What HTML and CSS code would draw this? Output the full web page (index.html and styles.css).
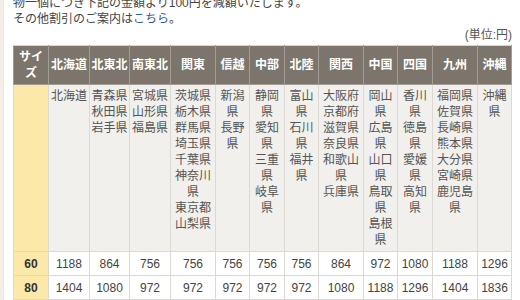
FILE: index.html
```html
<!DOCTYPE html>
<html lang="ja">
<head>
<meta charset="utf-8">
<link rel="stylesheet" href="styles.css">
</head>
<body>
<div class="page">
  <div class="side"></div>
  <main class="main">
    <p class="intro">物一個につき下記の金額より100円を減額いたします。<br>その他割引のご案内は<a href="#" class="link">こちら</a>。</p>
    <p class="unit">(単位:円)</p>
    <table class="rates">
      <thead>
        <tr>
          <th class="w35">サイズ</th><th class="w41">北海道</th><th class="w40">北東北</th><th class="w41">南東北</th><th class="w45">関東</th><th class="w34">信越</th><th class="w35">中部</th><th class="w34">北陸</th><th class="w45">関西</th><th class="w34">中国</th><th class="w35">四国</th><th class="w45">九州</th><th>沖縄</th>
        </tr>
      </thead>
      <tbody>
        <tr class="areas">
          <td class="size"></td>
          <td>北海道</td>
          <td>青森県<br>秋田県<br>岩手県</td>
          <td>宮城県<br>山形県<br>福島県</td>
          <td>茨城県<br>栃木県<br>群馬県<br>埼玉県<br>千葉県<br>神奈川県<br>東京都<br>山梨県</td>
          <td>新潟県<br>長野県</td>
          <td>静岡県<br>愛知県<br>三重県<br>岐阜県</td>
          <td>富山県<br>石川県<br>福井県</td>
          <td>大阪府<br>京都府<br>滋賀県<br>奈良県<br>和歌山県<br>兵庫県</td>
          <td>岡山県<br>広島県<br>山口県<br>鳥取県<br>島根県</td>
          <td>香川県<br>徳島県<br>愛媛県<br>高知県</td>
          <td>福岡県<br>佐賀県<br>長崎県<br>熊本県<br>大分県<br>宮崎県<br>鹿児島県</td>
          <td>沖縄県</td>
        </tr>
        <tr class="price">
          <td class="size">60</td><td>1188</td><td>864</td><td>756</td><td>756</td><td>756</td><td>756</td><td>756</td><td>864</td><td>972</td><td>1080</td><td>1188</td><td>1296</td>
        </tr>
        <tr class="price">
          <td class="size">80</td><td>1404</td><td>1080</td><td>972</td><td>972</td><td>972</td><td>972</td><td>972</td><td>1080</td><td>1188</td><td>1296</td><td>1404</td><td>1836</td>
        </tr>
      </tbody>
    </table>
  </main>
</div>
</body>
</html>
```

FILE: styles.css
```css
html, body {
  margin: 0;
  padding: 0;
  background: #fff;
}
body {
  font-family: "Liberation Sans", "Noto Sans CJK JP", sans-serif;
  font-size: 12px;
  line-height: 16px;
  color: #444;
  overflow: hidden;
}
.page {
  display: flex;
  min-height: 300px;
}
.side {
  width: 3px;
  flex: none;
  background: #f3efe6;
  border-right: 1px solid #ece6da;
}
.main {
  width: 499px;
  flex: none;
  padding: 0 8px 0 9px;
}
.intro {
  margin: -5px 0 0;
  color: #444;
}
.link {
  color: #2a5ca8;
  text-decoration: none;
}
.unit {
  margin: 0 0 2px;
  text-align: right;
  color: #555;
}
.rates {
  width: 499px;
  table-layout: fixed;
  border-collapse: collapse;
  border: 1px solid #d9d6ce;
  font-size: 12px;
  line-height: 16px;
}
.rates th {
  background: #7b756b;
  color: #fff;
  font-weight: bold;
  height: 38px;
  padding: 0;
  line-height: 16px;
  border: 1px solid #a39d93;
  border-top-color: #d9d6ce;
  text-align: center;
  vertical-align: middle;
}
.w34 { width: 33px; }
.w35 { width: 34px; }
.w40 { width: 39px; }
.w41 { width: 40px; }
.w45 { width: 44px; }
.rates td {
  border: 1px solid #dcd9d2;
  text-align: center;
  padding: 0;
  line-height: 16px;
}
.areas td {
  background: #f1f0ed;
  vertical-align: top;
  padding-top: 3px;
  padding-bottom: 3px;
  color: #555;
  line-height: 16px;
}
.price td {
  background: #fff;
  height: 23px;
  color: #444;
}
.rates td.size {
  background: #fce8a8;
  font-weight: bold;
  color: #333;
}
```
